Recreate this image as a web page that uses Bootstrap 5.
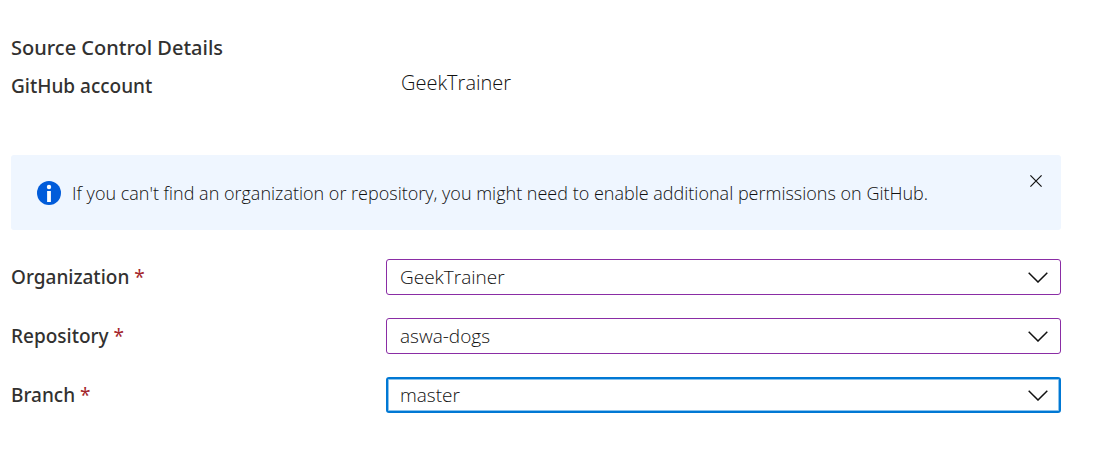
<!DOCTYPE html>
<html lang="en">
<head>
<meta charset="utf-8">
<meta name="viewport" content="width=device-width, initial-scale=1">
<title>Source Control Details</title>
<link href="https://cdn.jsdelivr.net/npm/bootstrap@5.3.0/dist/css/bootstrap.min.css" rel="stylesheet">
<style>
body { font-family: "Open Sans", "Noto Sans", sans-serif; font-size: 19px; line-height: 28px; color: #323130; background: #fff; }
.page { padding: 34px 59px 24px 11px; }
.form-line { display: grid; grid-template-columns: 375px 1fr; align-items: center; }
.heading { font-family: "Noto Sans", sans-serif; font-size: 20px; line-height: 28px; font-weight: 500; }
.name { font-family: "Noto Sans", sans-serif; font-size: 19px; font-weight: 500; }
.account-line { margin-top: 7px; align-items: start; }
.account-line .name { padding-top: 3px; }
.account { padding-left: 15px; font-size: 20px; font-weight: 300; color: #111; }
.notice { background: #eff6ff; border-radius: 3px; min-height: 75px; padding: 0 14px 0 26px; font-size: 18px; font-weight: 300; color: #111; margin-top: 55px; margin-bottom: 29px; gap: 11px; }
.dismiss { width: 22px; height: 22px; margin-top: 15px; }
.req { color: #a4262c; font-weight: 400; }
.picker { height: 36px; border: 1px solid #8a2da5; border-radius: 3px; padding: 0 40px 0 13px; font-size: 19px; font-weight: 300; line-height: 28px; color: #111;
 background-image: url("data:image/svg+xml,%3Csvg xmlns='http://www.w3.org/2000/svg' viewBox='0 0 20 11'%3E%3Cpath d='M.7 .7L10 10L19.3 .7' fill='none' stroke='%23111' stroke-width='1.5'/%3E%3C/svg%3E"); background-size: 20px 11px; background-position: right 12px center; }
.picker:focus, .picker.current { border: 2px solid #0078d4; padding-left: 12px; background-position: right 11px center; box-shadow: inset 0 0 0 1px #8ac3ed; }
.fields { gap: 23px; }
</style>
</head>
<body>
<main class="page">
<h1 class="heading mb-0">Source Control Details</h1>
<div class="form-line account-line"><span class="name">GitHub account</span><span class="account">GeekTrainer</span></div>
<div class="notice d-flex align-items-center" role="status">
<svg class="flex-shrink-0" width="24" height="24" viewBox="0 0 24 24" aria-hidden="true"><circle cx="12" cy="12" r="12" fill="#015cda"/><circle cx="12" cy="6" r="2.2" fill="#fff"/><path d="M10.1 10h3.8v11h-3.8z" fill="#fff"/></svg>
<span class="flex-grow-1">If you can't find an organization or repository, you might need to enable additional permissions on GitHub.</span>
<button type="button" class="dismiss btn p-0 border-0 d-flex align-items-center justify-content-center align-self-start" aria-label="Dismiss"><svg width="12" height="12" viewBox="0 0 12 12"><path d="M.4 .4l11.2 11.2M11.6 .4L.4 11.6" stroke="#111" stroke-width="1.2"/></svg></button>
</div>
<form class="fields d-flex flex-column">
<div class="form-line"><label class="name" for="org">Organization <span class="req">*</span></label><select id="org" class="form-select picker"><option>GeekTrainer</option></select></div>
<div class="form-line"><label class="name" for="repo">Repository <span class="req">*</span></label><select id="repo" class="form-select picker"><option>aswa-dogs</option></select></div>
<div class="form-line"><label class="name" for="branch">Branch <span class="req">*</span></label><select id="branch" class="form-select picker current"><option>master</option></select></div>
</form>
</main>
<script src="https://cdn.jsdelivr.net/npm/bootstrap@5.3.0/dist/js/bootstrap.bundle.min.js"></script>
</body>
</html>
